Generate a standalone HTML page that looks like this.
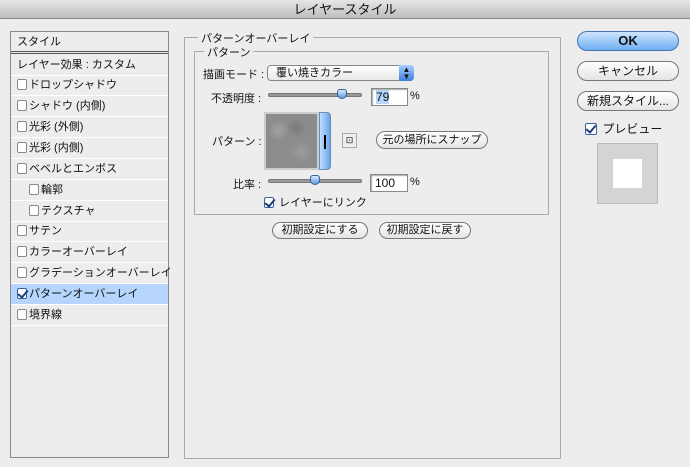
<!DOCTYPE html>
<html><head><meta charset="utf-8"><style>
*{margin:0;padding:0;box-sizing:border-box}
body{width:690px;height:467px;background:#ededed;font-family:"Liberation Sans","Noto Sans CJK JP",sans-serif;font-size:11px;color:#111;position:relative;overflow:hidden}
.a{position:absolute;white-space:nowrap}
#title{left:0;top:0;width:690px;height:19px;background:linear-gradient(#e6e6e6,#bdbdbd);border-bottom:1px solid #888;text-align:center;font-size:13px;line-height:19px}
#list{left:10px;top:31px;width:159px;height:427px;border:1px solid #8a8a8a;background:#ededed}
.row{position:absolute;left:0;width:157px;height:21px;border-bottom:1px solid #fff;line-height:20px;padding-left:6px}
.cb{display:inline-block;position:relative;width:10px;height:11px;border:1px solid #888;border-radius:2px;background:#fff;vertical-align:-2px;margin-right:2px}
.ck{border-color:#35629c}
.ck::after{content:"";position:absolute;left:2px;top:-1px;width:4px;height:8px;border:solid #1d3f78;border-width:0 2px 2px 0;transform:rotate(40deg)}
.btn{position:absolute;border:1px solid #777;border-radius:10px;background:linear-gradient(#fff,#e4e4e4);text-align:center;font-size:11px}
.grp{position:absolute;border:1px solid #aaa}
.lbl{position:absolute;background:#ededed;padding:0 3px}
.field{position:absolute;background:#fff;border:1px solid #888;box-shadow:inset 1px 1px 1px #aaa;font-size:12px;padding-left:4px;line-height:16px}
.track{position:absolute;height:4px;border-radius:2px;background:#999;border:1px solid #777}
.thumb{position:absolute;width:10px;height:10px;border-radius:3px 3px 5px 5px;background:linear-gradient(#d8ecff,#5c9ae0);border:1px solid #35629c}
</style></head><body>
<div class="a" id="title">レイヤースタイル</div>
<div class="a" id="list">
 <div class="row" style="top:0;height:22px;border-bottom:3px double #555">スタイル</div>
 <div class="row" style="top:23px">レイヤー効果 : カスタム</div>
 <div class="row" style="top:43px"><span class="cb"></span>ドロップシャドウ</div>
 <div class="row" style="top:64px"><span class="cb"></span>シャドウ (内側)</div>
 <div class="row" style="top:85px"><span class="cb"></span>光彩 (外側)</div>
 <div class="row" style="top:106px"><span class="cb"></span>光彩 (内側)</div>
 <div class="row" style="top:127px"><span class="cb"></span>ベベルとエンボス</div>
 <div class="row" style="top:148px;padding-left:18px"><span class="cb"></span>輪郭</div>
 <div class="row" style="top:169px;padding-left:18px"><span class="cb"></span>テクスチャ</div>
 <div class="row" style="top:189px"><span class="cb"></span>サテン</div>
 <div class="row" style="top:210px"><span class="cb"></span>カラーオーバーレイ</div>
 <div class="row" style="top:231px"><span class="cb"></span>グラデーションオーバーレイ</div>
 <div class="row" style="top:252px;background:#b5d5fd"><span class="cb ck"></span>パターンオーバーレイ</div>
 <div class="row" style="top:273px"><span class="cb"></span>境界線</div>
</div>
<div class="grp" style="left:184px;top:37px;width:377px;height:422px"></div>
<div class="lbl" style="left:198px;top:30px">パターンオーバーレイ</div>
<div class="grp" style="left:194px;top:51px;width:355px;height:164px"></div>
<div class="lbl" style="left:204px;top:44px">パターン</div>
<div class="a" style="left:203px;top:66px">描画モード :</div>
<div class="a" style="left:267px;top:65px;width:147px;height:16px;border:1px solid #888;border-radius:4px;background:linear-gradient(#fff,#e8e8e8);padding-left:8px;line-height:14px">覆い焼きカラー<span style="position:absolute;right:-1px;top:-1px;width:15px;height:16px;border-radius:0 4px 4px 0;background:linear-gradient(#a9d0ff,#3b80dc);color:#111;font-size:8px;text-align:center;line-height:7px;padding-top:1px">▲<br>▼</span></div>
<div class="a" style="left:211px;top:90px">不透明度 :</div>
<div class="track" style="left:268px;top:93px;width:94px"></div>
<div class="thumb" style="left:337px;top:89px"></div>
<div class="field" style="left:371px;top:88px;width:37px;height:18px"><span style="background:#b5d5fd">79</span></div>
<div class="a" style="left:410px;top:90px">%</div>
<div class="a" style="left:212px;top:133px">パターン :</div>
<div class="a" style="left:264px;top:112px;width:55px;height:58px;border:2px solid #ccc;background:#8c8c8c;background-image:radial-gradient(circle at 25% 30%,#9d9d9d 5%,transparent 20%),radial-gradient(circle at 70% 70%,#999 5%,transparent 22%),radial-gradient(circle at 60% 25%,#7e7e7e 5%,transparent 20%)"></div>
<div class="a" style="left:319px;top:112px;width:12px;height:58px;border-radius:0 4px 4px 0;background:linear-gradient(90deg,#c0dcff,#6aa5ec);border:1px solid #6a8cb8"><div style="position:absolute;left:4px;top:22px;width:2px;height:14px;background:#000"></div></div>
<div class="a" style="left:342px;top:133px;width:15px;height:15px;border:1px solid #aaa;background:#eee;font-size:9px;text-align:center;line-height:13px">⊡</div>
<div class="btn" style="left:376px;top:131px;width:112px;height:18px;line-height:16px">元の場所にスナップ</div>
<div class="a" style="left:233px;top:176px">比率 :</div>
<div class="track" style="left:268px;top:179px;width:94px"></div>
<div class="thumb" style="left:310px;top:175px"></div>
<div class="field" style="left:370px;top:174px;width:38px;height:18px">100</div>
<div class="a" style="left:410px;top:176px">%</div>
<div class="a" style="left:264px;top:194px"><span class="cb ck"></span> レイヤーにリンク</div>
<div class="btn" style="left:272px;top:222px;width:96px;height:17px;line-height:15px">初期設定にする</div>
<div class="btn" style="left:379px;top:222px;width:92px;height:17px;line-height:15px">初期設定に戻す</div>
<div class="btn" style="left:577px;top:31px;width:102px;height:20px;line-height:18px;font-size:13px;font-weight:bold;background:linear-gradient(#cfe6ff,#6eaef2);border-color:#4a74b0">OK</div>
<div class="btn" style="left:577px;top:61px;width:102px;height:20px;line-height:18px;font-size:12px">キャンセル</div>
<div class="btn" style="left:577px;top:91px;width:102px;height:20px;line-height:18px;font-size:12px">新規スタイル...</div>
<div class="a" style="left:585px;top:120px;font-size:12px"><span class="cb ck" style="width:12px;height:12px"></span> プレビュー</div>
<div class="a" style="left:597px;top:143px;width:61px;height:61px;background:#d4d4d4;border:1px solid #bbb"><div style="position:absolute;left:15px;top:15px;width:29px;height:29px;background:#fff"></div></div>
</body></html>
